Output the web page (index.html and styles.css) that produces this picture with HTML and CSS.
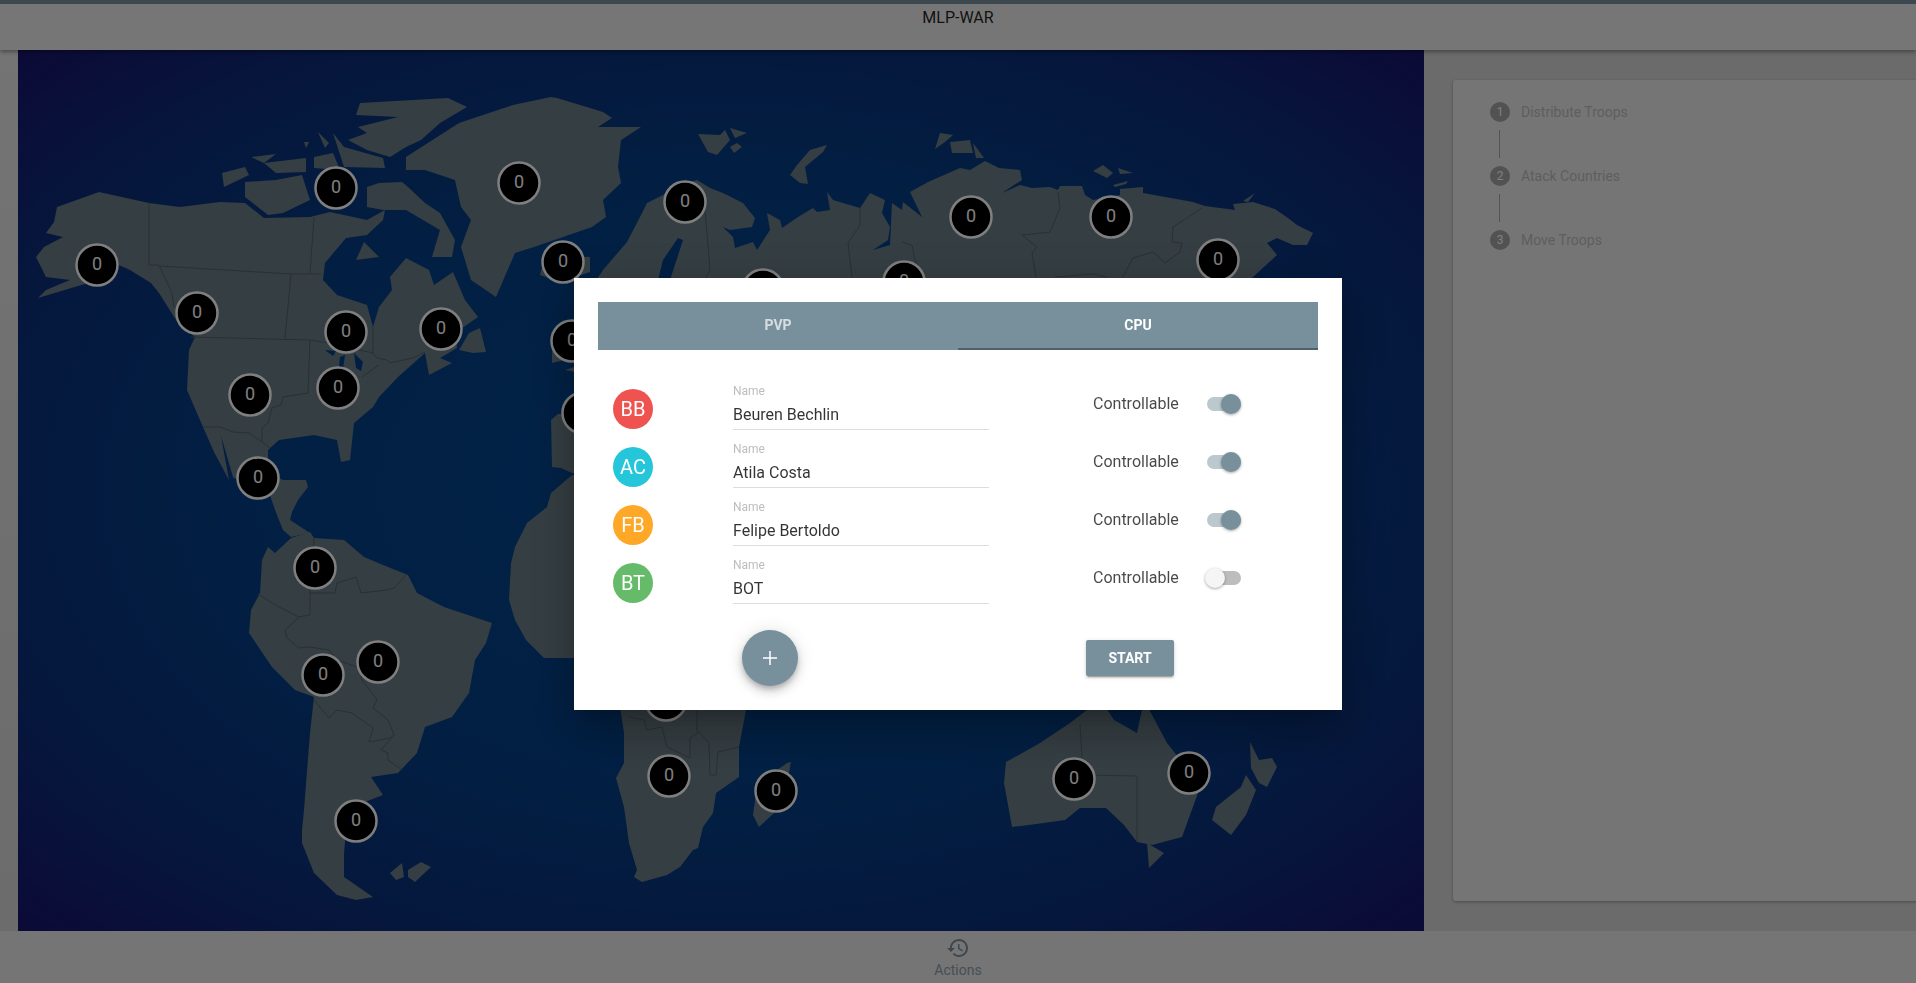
FILE: index.html
```html
<!DOCTYPE html>
<html lang="en">
<head>
<meta charset="utf-8">
<title>MLP-WAR</title>
<link rel="stylesheet" href="styles.css">
</head>
<body>
<div class="app">
  <header class="topbar">MLP-WAR</header>
  <main class="content">
    <div class="gutter"></div>
    <section class="map">
      <svg class="world" viewBox="18 50 1406 881" width="1406" height="881" xmlns="http://www.w3.org/2000/svg">
        <g class="land">
          <path d="M57 207L99 192L149 203L180 207L220 202L245 203L264 218L310 217L330 212L367 220L385 210L383 220L367 235L346 238L325 263L323 280L337 295L367 305L373 327L379 307L392 290L390 277L406 258L429 270L434 285L453 272L465 300L478 317L455 333L457 348L440 358L452 363L429 375L425 353L398 377L379 397L373 407L354 423L350 460L341 462L337 440L314 435L279 440L268 450L268 473L283 480L306 480L308 487L298 500L292 512L290 520L310 533L291 537L283 530L275 510L270 495L250 488L233 477L221 436L229 480L214 452L203 427L187 390L189 350L195 337L176 320L159 293L151 283L130 270L112 262L88 283L38 298L46 290L70 280L46 277L36 257L44 247L63 237L46 233L54 222Z"/>
          <path d="M459 350L469 333L480 328L486 352L473 353Z"/>
          <path d="M245 182L276 180L302 175L310 200L283 213L268 215L245 197Z"/>
          <path d="M222 173L245 167L249 175L224 187Z"/>
          <path d="M251 157L276 154L264 163Z"/>
          <path d="M264 163L306 158L306 172L276 173Z"/>
          <path d="M314 157L333 153L340 170L314 168Z"/>
          <path d="M318 132L329 143L325 148Z"/>
          <path d="M304 142L309 142L306 148Z"/>
          <path d="M333 133L344 147L383 158L385 168L344 167Z"/>
          <path d="M367 187L379 183L402 182L408 187L425 203L440 213L455 240L452 257L432 257L440 230L406 210L383 210L367 207Z"/>
          <path d="M360 103L448 98L467 107L440 123L421 140L406 147L390 157L367 150L348 140L367 133L358 127L398 117L356 115Z"/>
          <path d="M356 260L364 242L379 257Z"/>
          <path d="M406 157L459 123L513 105L551 97L557 98L603 112L612 118L598 127L641 127L621 140L618 167L621 183L603 200L606 217L592 227L534 247L515 253L496 297L471 280L461 247L471 220L461 207L455 180L425 170L406 170Z"/>
          <path d="M545 255L590 257L590 272L560 282L540 275Z"/>
          <path d="M698 134L720 135L725 130L730 140L717 155L708 152Z"/>
          <path d="M730 128L747 133L735 138Z"/>
          <path d="M730 147L737 143L742 147L734 153Z"/>
          <path d="M790 175L797 165L810 150L827 145L823 152L805 167L808 184L800 183Z"/>
          <path d="M935 149L940 133L953 135L945 142Z"/>
          <path d="M950 142L970 140L973 153L952 153Z"/>
          <path d="M973 143L984 158L976 158Z"/>
          <path d="M1093 171L1103 165L1113 173L1107 178Z"/>
          <path d="M1118 168L1133 173L1120 174Z"/>
          <path d="M1113 185L1128 181L1126 184L1115 187Z"/>
          <path d="M1243 201L1255 193L1248 202Z"/>
          <path d="M603 270L627 242L640 217L647 203L663 195L680 185L697 180L710 188L723 193L743 203L755 218L752 227L730 230L723 227L733 237L735 248L753 242L757 250L770 230L767 213L780 220L782 228L798 217L813 208L817 212L830 210L827 192L833 200L860 208L870 193L885 200L882 213L890 227L888 240L873 250L890 245L892 203L902 210L903 202L922 217L910 192L928 182L960 168L970 170L985 161L999 168L1020 170L1022 180L1002 193L1020 185L1032 188L1050 187L1058 190L1060 186L1082 186L1085 195L1093 200L1120 195L1120 189L1143 187L1143 193L1193 202L1205 206L1235 210L1233 204L1253 202L1275 209L1288 218L1297 225L1313 233L1307 245L1293 245L1277 238L1267 243L1277 255L1253 277L1240 290L1200 320L900 330L620 330L590 290Z"/>
          <path d="M552 338L574 330L580 350L565 360L552 363Z"/>
          <path d="M565 370L580 365L580 373Z"/>
          <path d="M551 420L558 414L600 414L600 470L572 473L561 468L552 467Z"/>
          <path d="M572 475L800 475L780 700L746 710L739 747L739 777L716 793L713 813L703 827L698 848L693 850L680 867L667 875L642 882L634 877L637 870L629 843L624 807L616 778L624 763L624 733L619 700L579 658L544 658L526 640L515 620L509 600L511 563L515 547L527 523L547 507L551 493Z"/>
          <path d="M787 763L791 762L789 773L785 790L774 813L759 827L753 815L756 793L770 775Z"/>
          <path d="M1006 762L1040 743L1070 723L1083 713L1101 700L1114 720L1137 733L1144 700L1167 743L1175 753L1198 793L1182 837L1152 845L1137 842L1124 825L1106 808L1080 808L1065 820L1029 825L1012 827L1004 783Z"/>
          <path d="M1147 843L1164 853L1149 868Z"/>
          <path d="M1250 742L1259 760L1272 758L1277 767L1267 787L1259 783L1251 768Z"/>
          <path d="M1246 775L1256 790L1246 815L1231 835L1212 820L1216 807L1241 787Z"/>
          <path d="M310 532L314 538L344 540L364 557L383 565L408 575L417 593L444 607L492 623L486 643L475 660L469 693L452 717L425 727L417 753L398 773L371 777L383 795L352 807L346 830L344 853L344 877L373 897L356 900L337 895L314 873L302 843L302 830L304 810L310 733L314 697L295 690L272 667L249 633L251 610L260 593L262 560L268 547L275 553L291 538Z"/>
          <path d="M390 873L402 863L404 877L396 880Z"/>
          <path d="M408 870L421 862L431 867L415 882L408 877Z"/>
        </g>
        <g class="water">
          <path d="M678 238L683 240L670 280L658 280L663 260Z"/>
          <path d="M325 350L336 351L333 356Z"/>
          <path d="M340 357L345 355L343 369L339 366Z"/>
          <path d="M354 353L363 362L361 371L356 368Z"/>
        </g>
        <g class="borders">
          <path d="M149 203L149 265L159 265L172 293L174 308"/>
          <path d="M159 266L291 274L321 274"/>
          <path d="M314 217L310 273"/>
          <path d="M291 274L285 338"/>
          <path d="M191 337L310 340L323 342L373 353L373 327"/>
          <path d="M373 353L377 358L387 360L390 363L413 358L425 352"/>
          <path d="M362 377L379 365"/>
          <path d="M310 340L308 393L283 397L281 405L272 408L268 423L262 428L262 442"/>
          <path d="M203 427L220 427L233 432L249 433L262 442L270 448"/>
          <path d="M314 538L310 593L335 593L337 583L356 577L361 593L387 590L394 588L406 575"/>
          <path d="M310 593L310 615L299 617L279 607L258 594"/>
          <path d="M299 617L285 630L287 638L299 648L310 647L329 650L337 660L360 668L362 680L377 700L373 708L388 720L394 735L381 750L388 753L388 760L402 770"/>
          <path d="M314 700L329 718L337 710L352 713L373 728L369 742L390 738L394 735"/>
          <path d="M705 210L710 270L705 280"/>
          <path d="M860 208L860 225L848 243L852 277"/>
          <path d="M902 242L912 245L915 260L923 277"/>
          <path d="M1058 192L1060 208L1050 232L1022 235L1037 247L1032 253L1036 277"/>
          <path d="M1202 208L1173 227L1172 242L1182 243L1180 252L1165 263L1153 252L1133 258L1123 277"/>
          <path d="M1055 277L1093 274L1107 277"/>
          <path d="M629 717L644 720L647 730L662 727L667 747L690 758L690 738L699 732L709 743L710 775L716 775L718 752L739 747"/>
          <path d="M697 705L697 732"/>
          <path d="M1080 725L1083 775L1137 776L1137 842"/>
        </g>
        <g class="pins">
          <g><circle cx="97" cy="265" r="20.5"/><text x="97" y="270">0</text></g>
          <g><circle cx="197" cy="313" r="20.5"/><text x="197" y="318">0</text></g>
          <g><circle cx="336" cy="188" r="20.5"/><text x="336" y="193">0</text></g>
          <g><circle cx="519" cy="183" r="20.5"/><text x="519" y="188">0</text></g>
          <g><circle cx="563" cy="262" r="20.5"/><text x="563" y="267">0</text></g>
          <g><circle cx="346" cy="332" r="20.5"/><text x="346" y="337">0</text></g>
          <g><circle cx="441" cy="329" r="20.5"/><text x="441" y="334">0</text></g>
          <g><circle cx="338" cy="388" r="20.5"/><text x="338" y="393">0</text></g>
          <g><circle cx="250" cy="395" r="20.5"/><text x="250" y="400">0</text></g>
          <g><circle cx="258" cy="478" r="20.5"/><text x="258" y="483">0</text></g>
          <g><circle cx="572" cy="341" r="20.5"/><text x="572" y="346">0</text></g>
          <g><circle cx="583" cy="413" r="20.5"/><text x="583" y="418">0</text></g>
          <g><circle cx="315" cy="568" r="20.5"/><text x="315" y="573">0</text></g>
          <g><circle cx="323" cy="675" r="20.5"/><text x="323" y="680">0</text></g>
          <g><circle cx="378" cy="662" r="20.5"/><text x="378" y="667">0</text></g>
          <g><circle cx="356" cy="821" r="20.5"/><text x="356" y="826">0</text></g>
          <g><circle cx="666" cy="700" r="20.5"/><text x="666" y="705">0</text></g>
          <g><circle cx="669" cy="776" r="20.5"/><text x="669" y="781">0</text></g>
          <g><circle cx="776" cy="791" r="20.5"/><text x="776" y="796">0</text></g>
          <g><circle cx="1074" cy="779" r="20.5"/><text x="1074" y="784">0</text></g>
          <g><circle cx="1189" cy="773" r="20.5"/><text x="1189" y="778">0</text></g>
          <g><circle cx="685" cy="202" r="20.5"/><text x="685" y="207">0</text></g>
          <g><circle cx="971" cy="217" r="20.5"/><text x="971" y="222">0</text></g>
          <g><circle cx="1111" cy="217" r="20.5"/><text x="1111" y="222">0</text></g>
          <g><circle cx="1218" cy="260" r="20.5"/><text x="1218" y="265">0</text></g>
          <g><circle cx="763" cy="290" r="20.5"/><text x="763" y="295">0</text></g>
          <g><circle cx="904" cy="282" r="20.5"/><text x="904" y="287">0</text></g>
        </g>
      </svg>
    </section>
    <aside class="side">
      <div class="card">
        <ol class="steps">
          <li class="step"><span class="step-num">1</span><span class="step-label">Distribute Troops</span></li>
          <li class="step-line"></li>
          <li class="step"><span class="step-num">2</span><span class="step-label">Atack Countries</span></li>
          <li class="step-line"></li>
          <li class="step"><span class="step-num">3</span><span class="step-label">Move Troops</span></li>
        </ol>
      </div>
    </aside>
  </main>
  <footer class="bottombar">
    <svg class="history" viewBox="0 0 24 24" width="24" height="24" xmlns="http://www.w3.org/2000/svg"><path d="M13 3c-4.97 0-9 4.03-9 9H1l3.89 3.89.07.14L9 12H6c0-3.87 3.13-7 7-7s7 3.13 7 7-3.13 7-7 7c-1.93 0-3.68-.79-4.94-2.06l-1.42 1.42C8.27 19.99 10.51 21 13 21c4.97 0 9-4.03 9-9s-4.03-9-9-9zm-1 5v5l4.28 2.54.72-1.21-3.5-2.08V8H12z"/></svg>
    <span class="bottom-label">Actions</span>
  </footer>
</div>

<div class="overlay">
  <div class="modal">
    <div class="tabs">
      <div class="tab">PVP</div>
      <div class="tab tab-active">CPU</div>
    </div>
    <div class="players">
      <div class="player">
        <div class="avatar avatar-red">BB</div>
        <div class="field"><div class="field-label">Name</div><div class="field-value">Beuren Bechlin</div></div>
        <div class="control-label">Controllable</div>
        <div class="toggle toggle-on"><span class="thumb"></span></div>
      </div>
      <div class="player">
        <div class="avatar avatar-cyan">AC</div>
        <div class="field"><div class="field-label">Name</div><div class="field-value">Atila Costa</div></div>
        <div class="control-label">Controllable</div>
        <div class="toggle toggle-on"><span class="thumb"></span></div>
      </div>
      <div class="player">
        <div class="avatar avatar-orange">FB</div>
        <div class="field"><div class="field-label">Name</div><div class="field-value">Felipe Bertoldo</div></div>
        <div class="control-label">Controllable</div>
        <div class="toggle toggle-on"><span class="thumb"></span></div>
      </div>
      <div class="player">
        <div class="avatar avatar-green">BT</div>
        <div class="field"><div class="field-label">Name</div><div class="field-value">BOT</div></div>
        <div class="control-label">Controllable</div>
        <div class="toggle"><span class="thumb"></span></div>
      </div>
    </div>
    <div class="actions">
      <button class="fab" type="button" aria-label="Add player">
        <svg viewBox="0 0 24 24" width="24" height="24" xmlns="http://www.w3.org/2000/svg"><path d="M12 5v14M5 12h14"/></svg>
      </button>
      <button class="start" type="button">START</button>
    </div>
  </div>
</div>
</body>
</html>
```
FILE: styles.css
```css
* { box-sizing: border-box; }
html, body { margin: 0; height: 100%; overflow: hidden; }
body { font-family: Roboto, "Liberation Sans", sans-serif; background: #dcdcdc; color: rgba(0,0,0,.87); }

.app { display: flex; flex-direction: column; height: 983px; }

.topbar {
  position: relative; z-index: 2;
  height: 50px; flex: none;
  border-top: 4px solid #78909c;
  background: #ececec;
  font-size: 16px; line-height: 28px;
  text-align: center;
  box-shadow: 0 2px 4px rgba(0,0,0,.35);
}

.content { display: flex; flex: 1; min-height: 0; }
.gutter { width: 18px; flex: none; background: linear-gradient(#e8e8e8, #d8d8d8); }
.map {
  width: 1406px; flex: none;
  background: radial-gradient(ellipse farthest-corner at center, #034690 0%, #043f86 50%, #0c2d78 78%, #18146e 100%);
}
.world { display: block; }
.land path { fill: #6a7c85; }
.water path { fill: #033f86; }
.borders path { fill: none; stroke: #526169; stroke-width: 1; }
.pins circle { fill: #000; stroke: #ffffff; stroke-width: 2.5; }
.pins text { fill: #ffffff; font-family: Roboto, sans-serif; font-size: 18px; font-weight: 400; text-anchor: middle; }

.side { flex: 1; min-width: 0; padding: 30px 0 30px 29px; background: #d6d6d6; }
.card {
  height: 100%;
  margin-right: -10px;
  background: #ebebeb;
  border-radius: 3px;
  box-shadow: 0 1px 3px rgba(0,0,0,.3);
  padding: 22px 0 0 37px;
}
.steps { list-style: none; margin: 0; padding: 0; }
.step { display: flex; align-items: center; height: 20px; }
.step-num {
  width: 20px; height: 20px; border-radius: 50%;
  background: #a4a4a4; color: #fff;
  font-size: 12px; line-height: 20px; text-align: center;
}
.step-label { margin-left: 11px; font-size: 14px; color: #bcbcbc; }
.step-line { width: 1px; height: 28px; margin: 8px 0 8px 9px; background: #a8a8a8; }

.bottombar {
  height: 52px; flex: none;
  background: #ebebeb;
  display: flex; flex-direction: column; align-items: center;
  padding-top: 5px;
}
.history { display: block; fill: #78909c; }
.bottom-label { font-size: 14px; line-height: 20px; color: #8a9ea9; }

.overlay {
  position: fixed; inset: 0; z-index: 10;
  background: rgba(0,0,0,.5);
  display: flex; justify-content: center; align-items: flex-start;
  padding-top: 278px;
}
.modal {
  width: 768px; height: 432px;
  background: #fff;
  padding: 24px;
  box-shadow: 0 11px 15px -7px rgba(0,0,0,.2), 0 24px 38px 3px rgba(0,0,0,.14), 0 9px 46px 8px rgba(0,0,0,.12);
}
.tabs { display: flex; height: 48px; background: #78909c; }
.tab {
  flex: 1; text-align: center;
  font-size: 14px; font-weight: 700; line-height: 46px;
  color: rgba(255,255,255,.7);
  border-bottom: 2px solid transparent;
}
.tab-active { color: #fff; border-bottom-color: #4f626c; }

.players { margin-top: 30px; }
.player {
  height: 58px;
  display: grid;
  grid-template-columns: 135px 256px 104px 115px 36px;
  align-items: center;
}
.avatar {
  width: 40px; height: 40px; border-radius: 50%;
  margin-left: 15px;
  color: #fff; font-size: 20px; line-height: 40px; text-align: center;
}
.avatar-red { background: #ef5350; }
.avatar-cyan { background: #26c6da; }
.avatar-orange { background: #ffa726; }
.avatar-green { background: #66bb6a; }

.field { align-self: start; margin-top: 4px; border-bottom: 1px solid #dddddd; padding-bottom: 2px; grid-column: 2; }
.field-label { font-size: 12px; line-height: 14px; color: #bdbdbd; }
.field-value { font-size: 16px; line-height: 24px; margin-top: 5px; color: rgba(0,0,0,.8); }

.control-label { grid-column: 4; font-size: 16px; line-height: 20px; margin-bottom: 10px; color: rgba(0,0,0,.72); white-space: nowrap; }
.toggle {
  grid-column: 5; margin-left: -1px; margin-bottom: 10px;
  position: relative; width: 34px; height: 14px; border-radius: 7px;
  background: #bdbdbd;
}
.toggle-on { background: #bbc8ce; }
.thumb {
  position: absolute; top: -3px; left: -2px;
  width: 20px; height: 20px; border-radius: 50%;
  background: #f5f5f5;
  box-shadow: 0 1px 3px rgba(0,0,0,.35);
}
.toggle-on .thumb { left: auto; right: 0; background: #78909c; }

.actions {
  margin-top: 18px;
  display: grid;
  grid-template-columns: 144px 344px auto;
  align-items: center;
}
.fab {
  grid-column: 1 / span 2; margin-left: 144px;
  width: 56px; height: 56px; padding: 16px; border: 0; border-radius: 50%;
  background: #78909c;
  box-shadow: 0 3px 5px -1px rgba(0,0,0,.2), 0 6px 10px rgba(0,0,0,.14), 0 1px 18px rgba(0,0,0,.12);
}
.fab svg { display: block; }
.fab path { fill: none; stroke: #fff; stroke-width: 1.5; }
.start {
  grid-column: 3;
  width: 88px; height: 36px; border: 0; border-radius: 2px;
  background: #78909c; color: #fff;
  font-family: inherit; font-size: 14px; font-weight: 700; letter-spacing: 0;
  box-shadow: 0 3px 1px -2px rgba(0,0,0,.2), 0 2px 2px rgba(0,0,0,.14), 0 1px 5px rgba(0,0,0,.12);
}
```
